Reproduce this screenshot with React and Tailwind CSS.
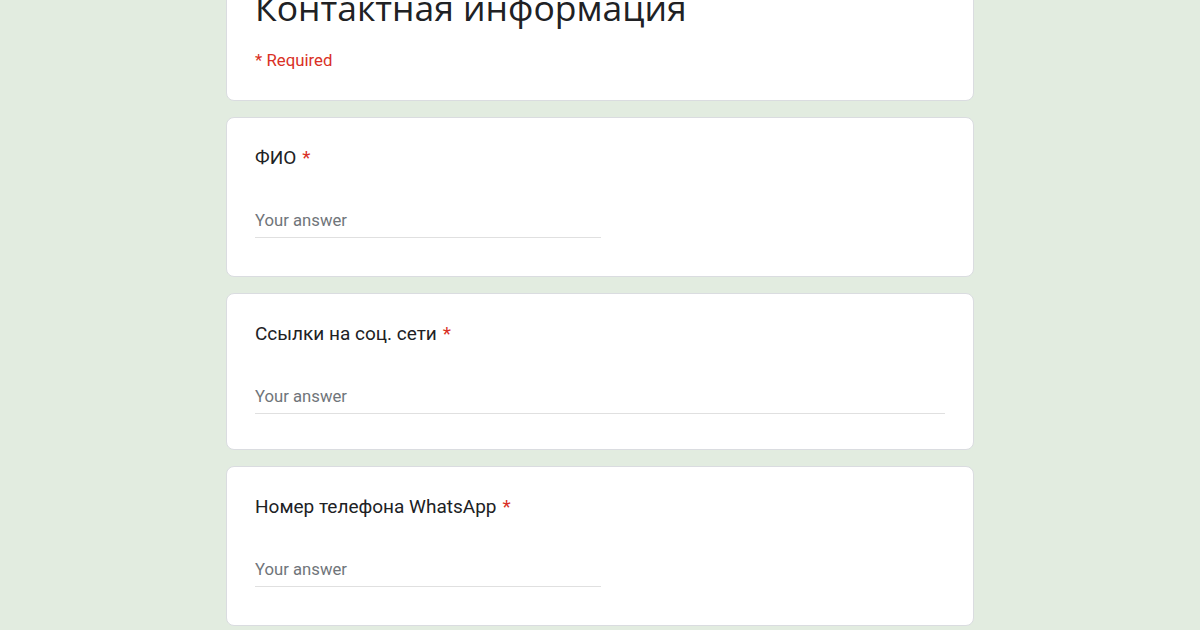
import React from "react";

const Question = ({ label, wide }) => (
    <div
        className={`bg-white rounded-lg border border-[#dadce0] px-[28px] pt-[28px] ${
            wide ? 'pb-[35px]' : 'pb-[38px]'
        }`}
    >
        <div className="text-[19px] leading-6 text-[#202124] font-['Roboto',sans-serif]">
            {label}
            <span className="text-[#d93025] ml-[6px]">*</span>
        </div>
        <div className="mt-[39px]">
            <div
                className={`text-[16.7px] leading-6 text-[#70757a] pb-[4px] border-b border-[#e0e0e0] font-['Roboto',sans-serif] ${
                    wide ? 'w-full' : 'w-[346px]'
                }`}
            >
                Your answer
            </div>
        </div>
    </div>
);

export default function App() {
    return (
        <div className="w-[1200px] h-[630px] overflow-hidden bg-[#e2ece0]">
            <div className="w-[748px] mx-auto -mt-[39px] flex flex-col gap-4">
                <div className="bg-white rounded-lg border border-[#dadce0] px-[28px] pt-[25px] pb-[28px]">
                    <div className="text-[35.5px] leading-10 text-[#202124] font-['Open_Sans',sans-serif]">
                        Контактная информация
                    </div>
                    <div className="mt-[21px] text-[16.8px] leading-6 text-[#d93025] font-['Roboto',sans-serif]">
                        * Required
                    </div>
                </div>
                <Question label="ФИО" />
                <Question label="Ссылки на соц. сети" wide />
                <Question label="Номер телефона WhatsApp" />
            </div>
        </div>
    );
}
